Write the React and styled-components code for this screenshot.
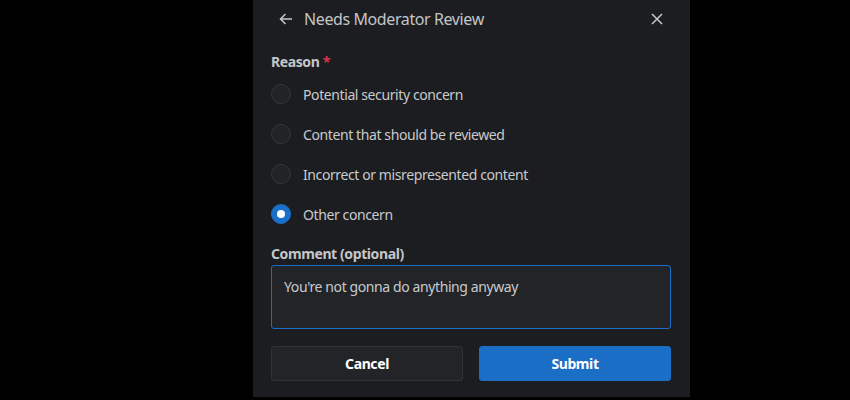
import styled, { createGlobalStyle } from "styled-components"

const GlobalStyle = createGlobalStyle`
    html, body {
        margin: 0;
        background: #000;
        height: 100%;
    }
    body {
        font-family: "Noto Sans", "Open Sans", sans-serif;
        letter-spacing: -0.4px;
    }
`

const reasons = [
    "Potential security concern",
    "Content that should be reviewed",
    "Incorrect or misrepresented content",
    "Other concern",
]

export default function App() {
    const selected = 3

    return (
        <>
            <GlobalStyle />
            <Page>
                <Dialog>
                    <Header>
                        <IconButton aria-label="Back">
                            <svg width="14" height="14" viewBox="0 0 14 14" fill="none" stroke="currentColor" strokeWidth="1.5">
                                <path d="M13 7H1.5M6.5 2L1.5 7l5 5" />
                            </svg>
                        </IconButton>
                        <Title>Needs Moderator Review</Title>
                        <CloseButton aria-label="Close">
                            <svg width="12" height="12" viewBox="0 0 12 12" fill="none" stroke="currentColor" strokeWidth="1.5">
                                <path d="M1 1l10 10M11 1L1 11" />
                            </svg>
                        </CloseButton>
                    </Header>

                    <Label>
                        Reason <Required>*</Required>
                    </Label>
                    <RadioList>
                        {reasons.map((r, i) => (
                            <RadioRow key={r}>
                                <Radio $checked={i === selected} />
                                <RadioText>{r}</RadioText>
                            </RadioRow>
                        ))}
                    </RadioList>

                    <Label $tight>Comment (optional)</Label>
                    <Comment defaultValue="You're not gonna do anything anyway" />

                    <Buttons>
                        <Button>Cancel</Button>
                        <Button $primary>Submit</Button>
                    </Buttons>
                </Dialog>
            </Page>
        </>
    )
}

const Page = styled.div`
    height: 400px;
    display: flex;
    align-items: flex-start;
    padding-left: 253px;
`

const Dialog = styled.div`
    width: 437px;
    height: 397px;
    box-sizing: border-box;
    background: #1c1d20;
    padding: 0 19px 0 18px;
    display: flex;
    flex-direction: column;
`

const Header = styled.div`
    height: 38px;
    display: flex;
    align-items: center;
    color: #c6c8cb;
`

const IconButton = styled.button`
    background: none;
    border: none;
    color: #c6c8cb;
    padding: 0;
    margin-left: 8px;
    width: 14px;
    height: 14px;
    display: flex;
    cursor: pointer;
`

const CloseButton = styled(IconButton)`
    margin-left: auto;
    margin-right: 8px;
    width: 12px;
    height: 12px;
`

const Title = styled.h2`
    margin: 0 0 0 11px;
    font-size: 16px;
    font-weight: 400;
    color: #c3c5c8;
`

const Label = styled.div`
    margin-top: ${p => (p.$tight ? "9px" : "14px")};
    font-size: 14px;
    font-weight: 700;
    color: #c4c6c9;
    line-height: 19px;
`

const Required = styled.span`
    color: #d9324c;
`

const RadioList = styled.div`
    display: flex;
    flex-direction: column;
    margin-top: 3px;
    margin-bottom: 1px;
`

const RadioRow = styled.label`
    height: 40px;
    display: flex;
    align-items: center;
    gap: 12px;
`

const Radio = styled.span`
    width: 20px;
    height: 20px;
    box-sizing: border-box;
    border-radius: 50%;
    flex-shrink: 0;
    background: ${p => (p.$checked ? "#1a70c9" : "#222327")};
    border: 1px solid ${p => (p.$checked ? "#1a70c9" : "#35373c")};
    display: flex;
    align-items: center;
    justify-content: center;
    &::after {
        content: "";
        display: ${p => (p.$checked ? "block" : "none")};
        width: 8px;
        height: 8px;
        border-radius: 50%;
        background: #fff;
    }
`

const RadioText = styled.span`
    font-size: 14px;
    color: #c8cacd;
`

const Comment = styled.textarea`
    margin-top: 2px;
    height: 64px;
    box-sizing: border-box;
    resize: none;
    background: #232428;
    border: 1px solid #1a6ec6;
    border-radius: 3px;
    color: #c8cacd;
    font-family: inherit;
    letter-spacing: inherit;
    font-size: 14px;
    padding: 11px 12px;
    outline: none;
`

const Buttons = styled.div`
    margin-top: 17px;
    display: grid;
    grid-template-columns: 1fr 1fr;
    gap: 16px;
`

const Button = styled.button`
    height: 35px;
    border-radius: 3px;
    font-family: inherit;
    letter-spacing: inherit;
    font-size: 14px;
    font-weight: 700;
    cursor: pointer;
    color: #fff;
    background: ${p => (p.$primary ? "#1b6ec6" : "#232428")};
    border: 1px solid ${p => (p.$primary ? "#1b6ec6" : "#303237")};
`
